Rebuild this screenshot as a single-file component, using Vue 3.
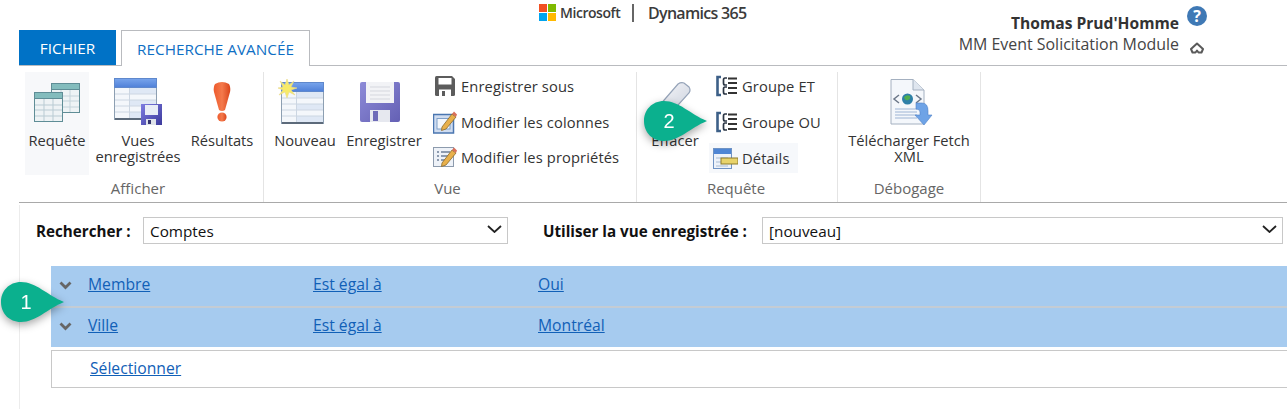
<script setup>
const conditions = [
  { field: 'Membre', op: 'Est égal à', value: 'Oui' },
  { field: 'Ville', op: 'Est égal à', value: 'Montréal' },
]
</script>

<template>
  <div class="page">
    <header class="head">
      <div class="tabs">
        <div class="tab tab-file">FICHIER</div>
        <div class="tab tab-active">RECHERCHE AVANCÉE</div>
      </div>
      <div class="brand">
        <svg class="ms" width="17" height="17" viewBox="0 0 17 17">
          <rect width="8" height="8" fill="#f25022" />
          <rect x="9" width="8" height="8" fill="#7fba00" />
          <rect y="9" width="8" height="8" fill="#00a4ef" />
          <rect x="9" y="9" width="8" height="8" fill="#ffb900" />
        </svg>
        <span class="ms-name">Microsoft</span>
        <span class="bar"></span>
        <span class="dyn">Dynamics 365</span>
      </div>
      <div class="user">
        <div class="user-row name-row">
          <span class="user-name">Thomas Prud'Homme</span>
          <svg class="help" width="20" height="20" viewBox="0 0 20 20">
            <circle cx="10" cy="10" r="10" fill="#3f79b5" />
            <text x="10" y="15.5" text-anchor="middle" class="help-q">?</text>
          </svg>
        </div>
        <div class="user-row org-row">
          <span class="org">MM Event Solicitation Module</span>
          <svg class="collapse" width="14" height="12" viewBox="0 0 14 12">
            <path d="M1 7 L7 1.500 L13 7 L11.500 10.500 L8.500 10.500 L7 8.500 L5.500 10.500 L2.500 10.500Z" fill="#fff" stroke="#5a5a5a" stroke-width="2" stroke-linejoin="round" />
          </svg>
        </div>
      </div>
    </header>

    <section class="ribbon">
      <div class="group g-show">
        <div class="group-body">
          <div class="big hl w-req">
            <div class="slot">
              <svg width="48" height="40" viewBox="0 0 48 40">
                <g stroke="#5f8d96" stroke-width="1">
                  <rect x="18.500" y="1.500" width="28" height="29" fill="#eef3f5" />
                  <rect x="18.500" y="1.500" width="28" height="6" fill="#83bcbd" />
                  <path d="M28 8v22M37 8v22M19 14h27M19 19h27M19 25h27" stroke="#c4d3da" fill="none" />
                  <rect x="1.500" y="10.500" width="28" height="29" fill="#eef3f5" stroke="#5f8d96" />
                  <rect x="1.500" y="10.500" width="28" height="6" fill="#83bcbd" />
                  <path d="M11 17v22M20 17v22M2 23h27M2 28h27M2 34h27" stroke="#b9cbd3" fill="none" />
                </g>
              </svg>
            </div>
            <div class="big-label">Requête</div>
          </div>
          <div class="big w-vues">
            <div class="slot">
              <svg width="48" height="48" viewBox="0 0 48 48">
                <defs>
                  <linearGradient id="hdA" x1="0" y1="0" x2="0" y2="1">
                    <stop offset="0" stop-color="#79a5ec" /><stop offset="1" stop-color="#4f80d8" />
                  </linearGradient>
                  <linearGradient id="flA" x1="0" y1="0" x2="1" y2="1">
                    <stop offset="0" stop-color="#7d7ce0" /><stop offset="1" stop-color="#3c3a9c" />
                  </linearGradient>
                </defs>
                <rect x="0.500" y="0.500" width="42" height="41" fill="#f4f7fb" stroke="#8d9fb2" />
                <rect x="0.500" y="0.500" width="42" height="9" fill="url(#hdA)" stroke="#5f88cc" />
                <rect x="16" y="10" width="26" height="6" fill="#dfe8f5" />
                <rect x="16" y="22" width="26" height="6" fill="#dfe8f5" />
                <rect x="16" y="34" width="26" height="6" fill="#dfe8f5" />
                <path d="M15.500 10v31M1 16h41M1 22h41M1 28h41M1 34h41" stroke="#ccd6e2" fill="none" />
                <rect x="1" y="40" width="41" height="2" fill="#5c6a7a" />
                <rect x="27" y="26" width="21" height="21" fill="url(#flA)" />
                <rect x="31" y="27" width="13" height="10" fill="#e8edf6" />
                <rect x="32" y="41" width="10" height="6" fill="#dfe3ea" />
                <rect x="34" y="42" width="3" height="4" fill="#34346e" />
              </svg>
            </div>
            <div class="big-label">Vues<br />enregistrées</div>
          </div>
          <div class="big w-res">
            <div class="slot">
              <svg width="20" height="40" viewBox="0 0 20 40">
                <defs>
                  <linearGradient id="exA" x1="0" y1="0" x2="1" y2="0">
                    <stop offset="0" stop-color="#ee5a2c" /><stop offset="0.5" stop-color="#f47a4c" /><stop offset="1" stop-color="#d9441a" />
                  </linearGradient>
                </defs>
                <path d="M3 2 Q10 -2 17 2 Q19 5 18 10 L13 28 Q10 30 7 28 L2 10 Q1 5 3 2Z" fill="url(#exA)" />
                <circle cx="10" cy="35" r="4.600" fill="url(#exA)" />
              </svg>
            </div>
            <div class="big-label">Résultats</div>
          </div>
        </div>
        <div class="group-label l-show">Afficher</div>
      </div>

      <div class="group g-view">
        <div class="group-body">
          <div class="big w-new">
            <div class="slot">
              <svg class="shift-l" width="46" height="46" viewBox="0 0 46 46">
                <defs>
                  <linearGradient id="hdB" x1="0" y1="0" x2="0" y2="1">
                    <stop offset="0" stop-color="#79a5ec" /><stop offset="1" stop-color="#4f80d8" />
                  </linearGradient>
                </defs>
                <rect x="3.500" y="3.500" width="42" height="41" fill="#f4f7fb" stroke="#8d9fb2" />
                <rect x="3.500" y="3.500" width="42" height="9" fill="url(#hdB)" stroke="#5f88cc" />
                <rect x="19" y="13" width="26" height="6" fill="#dfe8f5" />
                <rect x="19" y="25" width="26" height="6" fill="#dfe8f5" />
                <rect x="19" y="37" width="26" height="6" fill="#dfe8f5" />
                <path d="M18.500 13v31M4 19h41M4 25h41M4 31h41M4 37h41" stroke="#ccd6e2" fill="none" />
                <rect x="4" y="43" width="41" height="2" fill="#5c6a7a" />
                <path d="M9 0 L11 6 L16 2 L13 8 L19 9 L13 11 L17 16 L11 13 L9 19 L7 13 L1 16 L5 11 L0 9 L5 8 L2 2 L7 6Z" fill="#f7ea6a" stroke="#ead98c" stroke-width=".6" />
              </svg>
            </div>
            <div class="big-label">Nouveau</div>
          </div>
          <div class="big w-save">
            <div class="slot">
              <svg class="shift-l" width="40" height="40" viewBox="0 0 40 40">
                <defs>
                  <linearGradient id="flB" x1="0" y1="0" x2="1" y2="1">
                    <stop offset="0" stop-color="#8d8bd8" /><stop offset="1" stop-color="#6460b4" />
                  </linearGradient>
                </defs>
                <path d="M0 2 Q0 0 2 0 H38 Q40 0 40 2 V38 Q40 40 38 40 H2 Q0 40 0 38Z" fill="url(#flB)" />
                <rect x="6" y="0" width="28" height="21" fill="#f2f3f6" />
                <path d="M10 5h20M10 9h20M10 13h20M10 17h20" stroke="#d5d7de" />
                <rect x="10" y="28" width="20" height="12" fill="#e6e8ef" />
                <rect x="13" y="29" width="5" height="10" fill="#6e6bb8" />
              </svg>
            </div>
            <div class="big-label">Enregistrer</div>
          </div>
          <div class="small-col">
            <div class="small">
              <span class="ico">
                <svg width="22" height="22" viewBox="0 0 22 22">
                  <path d="M1 2.500 Q1 1 2.500 1 H18 L21 4 V19.500 Q21 21 19.500 21 H2.500 Q1 21 1 19.500Z" fill="#5c5c5c" />
                  <rect x="4.500" y="3" width="13" height="6.500" fill="#fff" />
                  <rect x="5" y="14.500" width="12" height="6.500" fill="#fff" />
                  <rect x="8" y="16" width="3" height="5" fill="#5c5c5c" />
                </svg>
              </span>
              <span>Enregistrer sous</span>
            </div>
            <div class="small">
              <span class="ico">
                <svg width="24" height="24" viewBox="0 0 24 24">
                  <rect x="0.500" y="4.500" width="20" height="18.500" fill="#cfdcf0" stroke="#4a76b0" stroke-width="1.500" />
                  <rect x="4" y="8.500" width="13" height="10.500" fill="#f4f7fb" stroke="#7f9fc8" />
                  <path d="M9 17 L19 4 L23 7 L13 19 L8.500 20.500Z" fill="#e8b04b" stroke="#8b6a2a" stroke-width=".8" />
                  <path d="M19 4 L21 1.500 L24 4.500 L23 7Z" fill="#d9705a" />
                </svg>
              </span>
              <span>Modifier les colonnes</span>
            </div>
            <div class="small">
              <span class="ico">
                <svg width="24" height="24" viewBox="0 0 24 24">
                  <rect x="0.500" y="2.500" width="20" height="19" fill="#eef2f8" stroke="#8d9bad" />
                  <path d="M4 7h2M8 7h9M4 11h2M8 11h9M4 15h2M8 15h6" stroke="#6e7f96" stroke-width="1.300" />
                  <path d="M9 18 L19 5 L23 8 L13 20 L8.500 21.500Z" fill="#e8b04b" stroke="#8b6a2a" stroke-width=".8" />
                  <path d="M19 5 L21 2.500 L24 5.500 L23 8Z" fill="#d9705a" />
                </svg>
              </span>
              <span>Modifier les propriétés</span>
            </div>
          </div>
        </div>
        <div class="group-label l-view">Vue</div>
      </div>

      <div class="group g-query">
        <div class="group-body">
          <div class="big w-erase">
            <div class="slot">
              <svg width="34" height="40" viewBox="0 0 34 40">
                <defs>
                  <linearGradient id="erA" x1="0" y1="0" x2="1" y2="1">
                    <stop offset="0" stop-color="#f8f8fb" /><stop offset="1" stop-color="#c9d0dc" />
                  </linearGradient>
                </defs>
                <path d="M20 2 Q23 0 26 1 L31 5 Q33 8 31 11 L12 32 L1 24Z" fill="url(#erA)" stroke="#95a3b8" stroke-width="1.200" />
              </svg>
            </div>
            <div class="big-label">Effacer</div>
          </div>
          <div class="small-col col-q">
            <div class="small">
              <svg class="grp" width="22" height="22" viewBox="0 0 22 22">
                <path d="M6 2 H2.500 V20 H6" fill="none" stroke="#3d6088" stroke-width="2.600" />
                <path d="M12 3 H10 Q8.500 3 8.500 5 V8 Q8.500 10 10 10 H12 M12 12 H10 Q8.500 12 8.500 14 V17 Q8.500 19 10 19 H12" fill="none" stroke="#2b3644" stroke-width="1.700" />
                <path d="M13 3.500h9M13 8h9M13 13h9M13 18h9" stroke="#333" stroke-width="2" />
              </svg>
              <span>Groupe ET</span>
            </div>
            <div class="small">
              <svg class="grp" width="22" height="22" viewBox="0 0 22 22">
                <path d="M6 2 H2.500 V20 H6" fill="none" stroke="#3d6088" stroke-width="2.600" />
                <path d="M12 3 H10 Q8.500 3 8.500 5 V8 Q8.500 10 10 10 H12 M12 12 H10 Q8.500 12 8.500 14 V17 Q8.500 19 10 19 H12" fill="none" stroke="#2b3644" stroke-width="1.700" />
                <path d="M13 3.500h9M13 8h9M13 13h9M13 18h9" stroke="#333" stroke-width="2" />
              </svg>
              <span>Groupe OU</span>
            </div>
            <div class="small details">
              <svg width="25" height="21" viewBox="0 0 25 21">
                <rect x="0.500" y="0.500" width="18" height="20" fill="#edf2f9" stroke="#6f93c4" />
                <rect x="1" y="1" width="17" height="5" fill="#4f86d4" />
                <path d="M3 10h12M3 14h12M3 18h12" stroke="#a9bcd4" />
                <rect x="8" y="10" width="17" height="6" fill="#e8d36a" stroke="#8c7a2c" />
              </svg>
              <span>Détails</span>
            </div>
          </div>
        </div>
        <div class="group-label l-query">Requête</div>
      </div>

      <div class="group g-debug">
        <div class="group-body">
          <div class="big w-fetch">
            <div class="slot">
              <svg class="shift-r" width="43" height="47" viewBox="0 0 43 47">
                <path d="M1 0.500 H23 L34 11 V45 H1Z" fill="#f4f7fb" stroke="#a4b0c0" />
                <path d="M23 0.500 V11 H34" fill="#dfe6ef" stroke="#a4b0c0" />
                <path d="M9 16 L4 20 L9 24 M26 16 L31 20 L26 24" fill="none" stroke="#6b7788" stroke-width="1.500" />
                <circle cx="17.500" cy="20" r="5.500" fill="#2d7fa8" />
                <path d="M14 18 q3 -3 6 -1 q1 3 -2 4 q-3 1 -4 -3Z" fill="#4fae4f" />
                <path d="M5 30h22M5 33h22M5 36h22M5 39h22" stroke="#9db4d4" />
                <path d="M26 24 H32 Q38 24 38 32 V36 H42 L34 46 L25 36 H30 V33 Q30 30 26 30Z" fill="#6ea3e6" stroke="#4f82c8" stroke-width=".6" />
              </svg>
            </div>
            <div class="big-label">Télécharger Fetch<br />XML</div>
          </div>
        </div>
        <div class="group-label">Débogage</div>
      </div>
    </section>

    <main class="content">
      <div class="search">
        <label class="s-label l-a">Rechercher :</label>
        <div class="select sel-a">
          <span class="sel-text">Comptes</span>
          <svg width="15" height="8" viewBox="0 0 15 8"><path d="M1 1 L7.500 7 L14 1" fill="none" stroke="#222" stroke-width="1.800" /></svg>
        </div>
        <label class="s-label l-b">Utiliser la vue enregistrée :</label>
        <div class="select sel-b">
          <span class="sel-text">[nouveau]</span>
          <svg width="15" height="8" viewBox="0 0 15 8"><path d="M1 1 L7.500 7 L14 1" fill="none" stroke="#222" stroke-width="1.800" /></svg>
        </div>
      </div>

      <div class="rows">
        <div v-for="c in conditions" :key="c.field" class="cond">
          <svg class="chev" width="13" height="9" viewBox="0 0 13 9"><path d="M1.500 1.500 L6.500 6.500 L11.500 1.500" fill="none" stroke="#666" stroke-width="2.800" /></svg>
          <a class="link c1">{{ c.field }}</a>
          <a class="link c2">{{ c.op }}</a>
          <a class="link">{{ c.value }}</a>
        </div>
        <div class="pick"><a class="link">Sélectionner</a></div>
      </div>
    </main>

    <div class="callout call-1">
      <svg width="63" height="40" viewBox="0 0 63 40"><path d="M20 0 C35 0 46 13 63 20 C46 27 35 40 20 40 C8 40 0 31 0 20 C0 9 8 0 20 0Z" fill="#0bb08e" /></svg>
      <span>1</span>
    </div>
    <div class="callout call-2">
      <svg width="63" height="40" viewBox="0 0 63 40"><path d="M20 0 C35 0 46 13 63 20 C46 27 35 40 20 40 C8 40 0 31 0 20 C0 9 8 0 20 0Z" fill="#0bb08e" /></svg>
      <span>2</span>
    </div>
  </div>
</template>

<style>
html, body { margin: 0; background: #fff; overflow: hidden; }
</style>

<style scoped>
.page {
  position: relative;
  width: 1287px;
  height: 409px;
  overflow: hidden;
  background: #fff;
  color: #333;
  font-family: "Open Sans", "Noto Sans", sans-serif;
  font-size: 14.7px;
}
.head {
  display: flex;
  height: 65px;
  padding-left: 19px;
}
.tabs {
  display: flex;
  align-self: flex-end;
  height: 35px;
  gap: 5px;
}
.tab { display: flex; align-items: center; justify-content: center; font-size: 15.3px; box-sizing: border-box; }
.tab-file { width: 97px; background: #0072c6; color: #fff; }
.tab-active {
  width: 189px;
  height: 36px;
  background: #fff;
  color: #0f6fc4;
  border: 1px solid #b9bbbf;
  border-bottom: 0;
  position: relative;
  z-index: 1;
}
.brand { display: flex; align-items: center; height: 25px; margin-left: 229px; color: #3b3b3b; }
.ms { display: block; }
.ms-name { margin-left: 4px; font-size: 14px; font-weight: 600; letter-spacing: -0.45px; width: 67px; }
.bar { width: 2px; height: 18px; background: #666; margin-left: 5px; }
.dyn { margin-left: 14px; font-size: 16px; font-weight: 600; letter-spacing: -0.7px; }
.user { margin-left: auto; width: 340px; padding-top: 6px; }
.user-row { display: flex; justify-content: flex-end; }
.name-row { height: 20px; padding-right: 80px; }
.user-name { font-weight: 700; font-size: 15.6px; line-height: 34px; height: 20px; }
.help { margin-left: 8px; }
.help-q { fill: #fff; font-size: 16px; font-weight: 700; font-family: "Open Sans", sans-serif; }
.org-row { padding-right: 83px; margin-top: 8px; }
.org { font-size: 15.95px; line-height: 20px; color: #444; }
.collapse { margin-left: 11px; margin-top: 8px; }
.ribbon {
  display: flex;
  margin-left: 19px;
  height: 138px;
  box-sizing: border-box;
  border-top: 1px solid #b9bbbf;
  border-bottom: 1px solid #a9a9a9;
  padding-top: 6px;
}
.group {
  display: flex;
  flex-direction: column;
  border-right: 1px solid #e4e4e4;
  box-sizing: border-box;
}
.g-show { width: 245px; }
.g-show .group-body, .g-view .group-body { padding-left: 6px; }
.g-view { width: 373px; }
.g-query { width: 201px; }
.g-query .group-body { padding-left: 5px; }
.g-debug { width: 143px; }
.group-body { display: flex; height: 103px; }
.group-label { height: 27px; line-height: 27px; text-align: center; color: #666; font-size: 15px; }
.l-show { padding-right: 6px; }
.l-view { padding-right: 5px; }
.l-query { padding-right: 2px; }
.big { display: flex; flex-direction: column; align-items: center; box-sizing: border-box; }
.hl { background: #f7f8fa; }
.slot { height: 60px; display: flex; align-items: center; justify-content: center; }
.shift-l { margin-right: 8px; }
.shift-r { margin-left: 4px; }
.big-label { text-align: center; line-height: 16px; white-space: nowrap; }
.w-req { width: 64px; }
.w-vues { width: 98px; }
.w-res { width: 70px; }
.w-new { width: 70px; }
.w-save { width: 88px; }
.w-erase { width: 66px; }
.w-fetch { width: 142px; }
.small-col { display: flex; flex-direction: column; margin-left: 5px; margin-top: -4px; }
.col-q { margin-left: 1px; }
.small { display: flex; align-items: center; height: 36px; gap: 4px; white-space: nowrap; letter-spacing: 0.12px; }
.ico { display: flex; justify-content: center; width: 24px; }
.grp { margin-left: 6px; margin-right: 1px; }
.details { background: #f6f8fb; width: 89px; height: 30px; margin-top: 3px; padding-left: 4px; gap: 4px; box-sizing: border-box; }
.content {
  margin-left: 19px;
  height: 207px;
  box-sizing: border-box;
  border-left: 1px solid #ececec;
  margin-top: 2px;
  padding-top: 11px;
}
.search { display: flex; align-items: center; height: 28px; padding-left: 16px; color: #111; }
.s-label { font-weight: 700; font-size: 15.2px; white-space: nowrap; padding-top: 2px; }
.l-a { width: 107px; }
.l-b { width: 219px; }
.select {
  display: flex;
  align-items: center;
  justify-content: space-between;
  box-sizing: border-box;
  height: 27px;
  border: 1px solid #c8c8c8;
  padding: 0 5px 0 6px;
  background: #fff;
}
.sel-text { font-size: 15.3px; padding-top: 2px; }
.select svg { margin-top: -3px; }
.sel-a { width: 365px; margin-right: 35px; }
.sel-b { width: 521px; }
.rows { margin-top: 22px; margin-left: 31px; }
.cond {
  display: flex;
  align-items: center;
  box-sizing: border-box;
  height: 39px;
  background: #a6cbef;
  padding-left: 8px;
  padding-bottom: 5px;
}
.cond:first-child { height: 42px; padding-bottom: 4px; border-bottom: 2px solid #c4ccd4; }
.chev { margin-right: 16px; margin-top: 3px; flex: none; }
.link { color: #1160b7; text-decoration: underline; font-size: 15.7px; }
.c1 { width: 225px; }
.c2 { width: 225px; }
.pick {
  margin-top: 3px;
  height: 38px;
  box-sizing: border-box;
  border: 1px solid #c8c8c8;
  border-right: 0;
  display: flex;
  align-items: center;
  padding-left: 38px;
  padding-bottom: 2px;
}
.callout {
  position: absolute;
  width: 63px;
  height: 40px;
  filter: drop-shadow(0 3px 4px rgba(0, 0, 0, 0.35));
}
.callout svg { display: block; }
.callout span {
  position: absolute;
  left: 0;
  width: 50px;
  top: 0;
  line-height: 40px;
  text-align: center;
  color: #fff;
  font-size: 20px;
  font-family: "Liberation Sans", sans-serif;
}
.call-1 { left: 1px; top: 282px; }
.call-2 { left: 644px; top: 101px; }
</style>
